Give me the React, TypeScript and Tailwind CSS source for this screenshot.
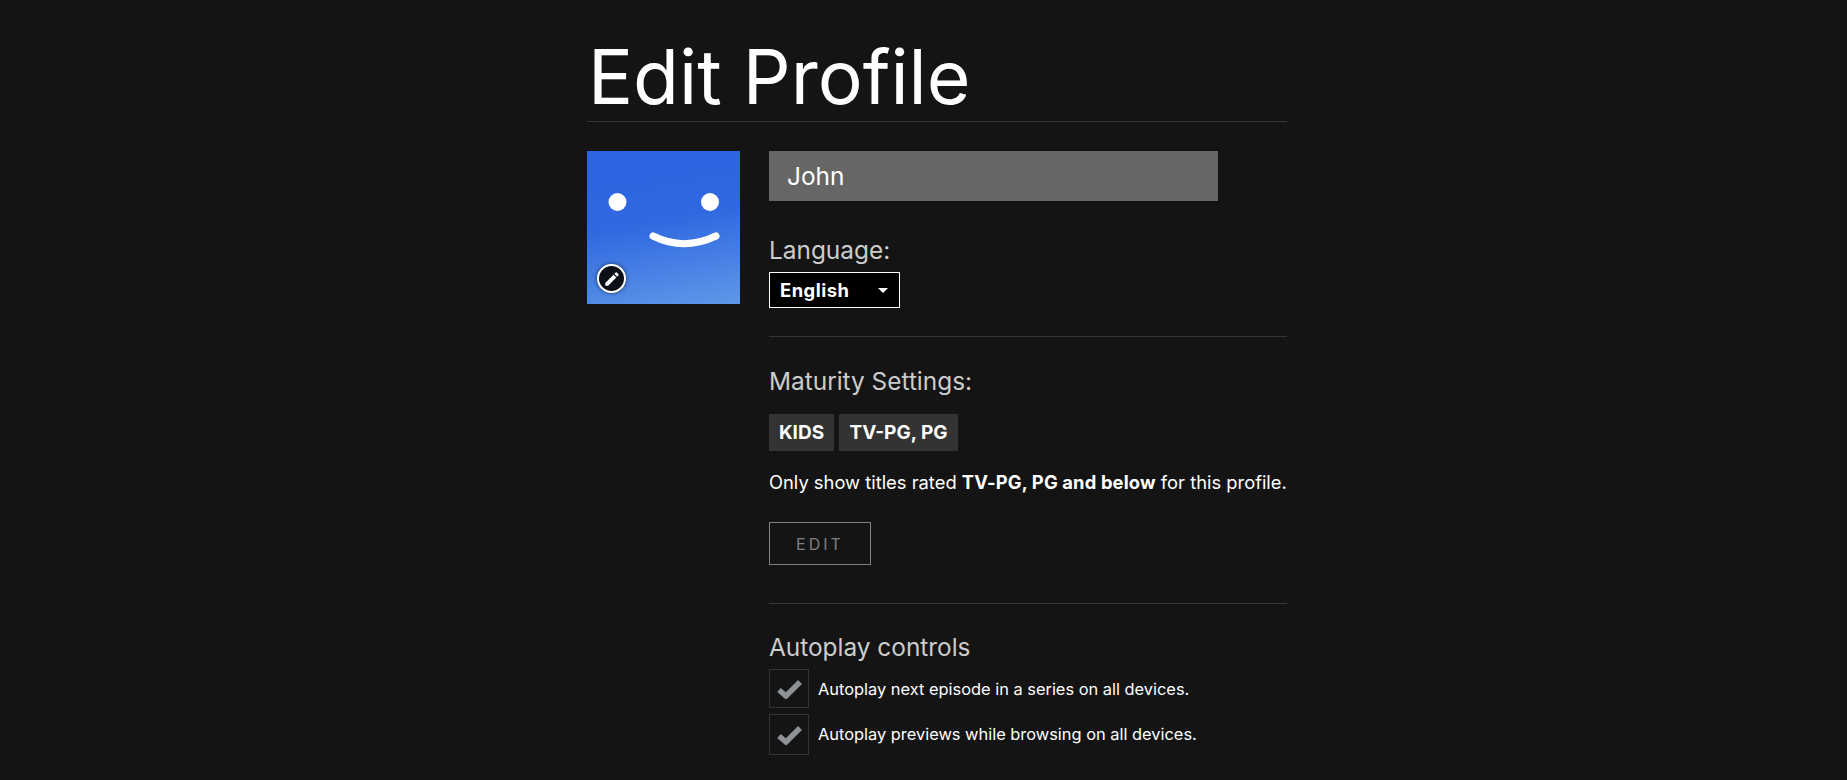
const font = "font-['Inter','Liberation_Sans',sans-serif]";

function SectionLabel({ children }: { children: React.ReactNode }) {
  return <div className="text-[24.4px] leading-[30px] text-[#cccccc]">{children}</div>;
}

function Divider() {
  return <div className="h-px bg-[#333333]" />;
}

function Autoplay({ label, tall }: { label: string; tall?: boolean }) {
  return (
    <div className="flex items-center">
      <div className={`flex w-[40px] items-center justify-center border border-[#333333] ${tall ? "h-[41px]" : "h-[39px]"}`}>
        <svg viewBox="0 0 25 20" className="h-[20px] w-[25px]">
          <polyline points="2,11 9,17 23,3" fill="none" stroke="#8e9297" strokeWidth="5.5" />
        </svg>
      </div>
      <span className={`ml-[9px] text-[16.4px] text-white ${tall ? "" : "pt-[1px]"}`}>{label}</span>
    </div>
  );
}

function Avatar() {
  return (
    <div className="relative h-[153px] w-[153px] shrink-0 bg-[linear-gradient(170deg,#2b63e2_0%,#2f68e0_45%,#5e98e9_100%)]">
      <svg viewBox="0 0 153 153" className="h-full w-full">
        <circle cx="30.5" cy="51" r="9" fill="#fff" />
        <circle cx="123" cy="51" r="9" fill="#fff" />
        <path d="M66 85 C88 96 108 95 129 85" fill="none" stroke="#fff" strokeWidth="7" strokeLinecap="round" />
      </svg>
      <div className="absolute bottom-[11px] left-[10px] flex h-[29px] w-[29px] items-center justify-center rounded-full border-2 border-white bg-[#0b0f17] shadow-[0_0_4px_rgba(0,0,0,0.6)]">
        <svg viewBox="0 0 24 24" className="h-[18px] w-[18px]" fill="#fff">
          <path d="M3 17.25V21h3.75L17.81 9.94l-3.75-3.75L3 17.25zM20.71 7.04a1 1 0 0 0 0-1.41l-2.34-2.34a1 1 0 0 0-1.41 0l-1.83 1.83 3.75 3.75 1.83-1.83z" />
        </svg>
      </div>
    </div>
  );
}

export default function App() {
  return (
    <div className={`h-[780px] overflow-hidden bg-[#141414] pl-[587px] text-white ${font}`}>
      <div className="w-[700px]">
        <h1 className="h-[121px] pt-[31px] pl-[1px] text-[75px] leading-[92px] font-[430]">Edit Profile</h1>
        <Divider />
        <div className="mt-[29px] flex gap-[29px]">
          <Avatar />
          <div className="flex-1">
            <div className="flex h-[50px] w-[449px] items-center bg-[#666666] pl-[18px] text-[24.4px] text-white">John</div>

            <div className="mt-[34px]">
              <SectionLabel>Language:</SectionLabel>
            </div>
            <div className="mt-[7px] flex h-[36px] w-[131px] items-center justify-between border border-white bg-black px-[10px] pt-[1px] text-[18.4px] font-bold tracking-[0.5px]">
              English
              <span className="mr-[1px] h-0 w-0 border-x-[5px] border-t-[5px] border-x-transparent border-t-white" />
            </div>

            <div className="mt-[28px]">
              <Divider />
            </div>
            <div className="mt-[29px]">
              <SectionLabel>Maturity Settings:</SectionLabel>
            </div>
            <div className="mt-[18px] flex gap-[5px] text-[19px] font-bold">
              <div className="flex h-[37px] w-[65px] items-center justify-center bg-[#333333] pt-[1px]">KIDS</div>
              <div className="flex h-[37px] w-[119px] items-center justify-center bg-[#333333] pt-[1px]">TV-PG, PG</div>
            </div>
            <p className="mt-[20px] text-[18.35px] leading-[22px] whitespace-nowrap">
              Only show titles rated <b className="tracking-[0.15px]">TV-PG, PG and below</b> for this profile.
            </p>
            <div className="mt-[29px] flex h-[43px] w-[102px] items-center justify-center border border-[#808080] text-[16px] tracking-[3px] text-[#808080]">EDIT</div>

            <div className="mt-[38px]">
              <Divider />
            </div>
            <div className="mt-[28px]">
              <SectionLabel>Autoplay controls</SectionLabel>
            </div>
            <div className="mt-[7px] flex flex-col gap-[6px]">
              <Autoplay label="Autoplay next episode in a series on all devices." />
              <Autoplay label="Autoplay previews while browsing on all devices." tall />
            </div>
          </div>
        </div>
      </div>
    </div>
  );
}
